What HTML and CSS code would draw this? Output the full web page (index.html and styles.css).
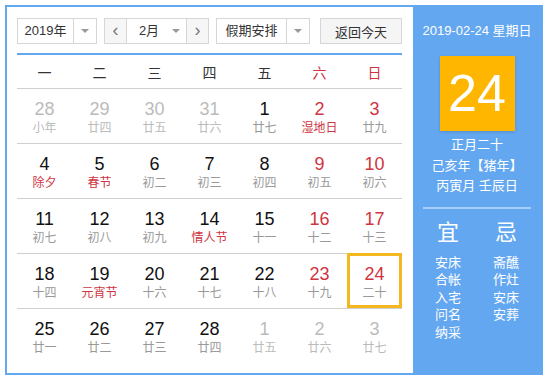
FILE: index.html
```html
<!DOCTYPE html>
<html>
<head>
    <title>万年历</title>
    <meta charset="UTF-8">
    <link rel="stylesheet" href="styles.css">
</head>
<body>
    <div class="calendar">
        <div class="main">
            <div class="toolbar">
                <div class="select year-select">
                    <span class="select-text">2019年</span>
                    <span class="select-arrow"><i></i></span>
                </div>
                <div class="month-group">
                    <span class="nav-btn">&lsaquo;</span>
                    <div class="month-select">
                        <span class="select-text">2月</span>
                        <span class="select-arrow plain"><i></i></span>
                    </div>
                    <span class="nav-btn">&rsaquo;</span>
                </div>
                <div class="select holiday-select">
                    <span class="select-text">假期安排</span>
                    <span class="select-arrow"><i></i></span>
                </div>
                <button class="today-btn">返回今天</button>
            </div>

            <div class="week-head">
                <span>一</span><span>二</span><span>三</span><span>四</span><span>五</span>
                <span class="red">六</span><span class="red">日</span>
            </div>

            <div class="days">
                <div class="row">
                    <div class="cell other"><b>28</b><em>小年</em></div>
                    <div class="cell other"><b>29</b><em>廿四</em></div>
                    <div class="cell other"><b>30</b><em>廿五</em></div>
                    <div class="cell other"><b>31</b><em>廿六</em></div>
                    <div class="cell"><b>1</b><em>廿七</em></div>
                    <div class="cell weekend"><b>2</b><em class="fest">湿地日</em></div>
                    <div class="cell weekend"><b>3</b><em>廿九</em></div>
                </div>
                <div class="row">
                    <div class="cell"><b>4</b><em class="fest">除夕</em></div>
                    <div class="cell"><b>5</b><em class="fest">春节</em></div>
                    <div class="cell"><b>6</b><em>初二</em></div>
                    <div class="cell"><b>7</b><em>初三</em></div>
                    <div class="cell"><b>8</b><em>初四</em></div>
                    <div class="cell weekend"><b>9</b><em>初五</em></div>
                    <div class="cell weekend"><b>10</b><em>初六</em></div>
                </div>
                <div class="row">
                    <div class="cell"><b>11</b><em>初七</em></div>
                    <div class="cell"><b>12</b><em>初八</em></div>
                    <div class="cell"><b>13</b><em>初九</em></div>
                    <div class="cell"><b>14</b><em class="fest">情人节</em></div>
                    <div class="cell"><b>15</b><em>十一</em></div>
                    <div class="cell weekend"><b>16</b><em>十二</em></div>
                    <div class="cell weekend"><b>17</b><em>十三</em></div>
                </div>
                <div class="row">
                    <div class="cell"><b>18</b><em>十四</em></div>
                    <div class="cell"><b>19</b><em class="fest">元宵节</em></div>
                    <div class="cell"><b>20</b><em>十六</em></div>
                    <div class="cell"><b>21</b><em>十七</em></div>
                    <div class="cell"><b>22</b><em>十八</em></div>
                    <div class="cell weekend"><b>23</b><em>十九</em></div>
                    <div class="cell weekend today"><b>24</b><em>二十</em></div>
                </div>
                <div class="row">
                    <div class="cell"><b>25</b><em>廿一</em></div>
                    <div class="cell"><b>26</b><em>廿二</em></div>
                    <div class="cell"><b>27</b><em>廿三</em></div>
                    <div class="cell"><b>28</b><em>廿四</em></div>
                    <div class="cell other"><b>1</b><em>廿五</em></div>
                    <div class="cell other"><b>2</b><em>廿六</em></div>
                    <div class="cell other"><b>3</b><em>廿七</em></div>
                </div>
            </div>
        </div>

        <div class="side">
            <div class="side-date">2019-02-24 星期日</div>
            <div class="big-day">24</div>
            <div class="lunar">
                <p>正月二十</p>
                <p>己亥年【猪年】</p>
                <p>丙寅月 壬辰日</p>
            </div>
            <div class="side-line"></div>
            <div class="almanac">
                <div class="alm-col">
                    <h2>宜</h2>
                    <p>安床</p>
                    <p>合帐</p>
                    <p>入宅</p>
                    <p>问名</p>
                    <p>纳采</p>
                </div>
                <div class="alm-col">
                    <h2>忌</h2>
                    <p>斋醮</p>
                    <p>作灶</p>
                    <p>安床</p>
                    <p>安葬</p>
                </div>
            </div>
        </div>
    </div>
</body>
</html>
```

FILE: styles.css
```css
* {
    margin: 0;
    padding: 0;
    box-sizing: border-box;
}

body {
    font-family: "Liberation Sans", "Noto Sans CJK SC", sans-serif;
    background: #fff;
    color: #333;
}

.calendar {
    margin: 5px 0 0 5px;
    width: 538px;
    height: 370px;
    border: 2px solid #63a7f0;
    display: flex;
}

.main {
    width: 406px;
    padding: 11px 11px 0 10px;
}

/* Toolbar */
.toolbar {
    display: flex;
    height: 26px;
    margin-bottom: 9px;
    font-size: 13px;
}

.select,
.month-group {
    display: flex;
    border: 1px solid #d6d6d6;
    background: #fff;
}

.year-select {
    width: 80px;
}

.year-select .select-text {
    width: 55px;
}

.holiday-select {
    width: 94px;
    margin-left: 7px;
}

.holiday-select .select-text {
    width: 69px;
}

.select-text {
    display: flex;
    align-items: center;
    justify-content: center;
    line-height: 24px;
}

.select-arrow {
    flex: 1;
    display: flex;
    align-items: center;
    justify-content: center;
    border-left: 1px solid #d6d6d6;
}

.select-arrow.plain {
    border-left: none;
}

.select-arrow i {
    width: 0;
    height: 0;
    border-left: 4px solid transparent;
    border-right: 4px solid transparent;
    border-top: 4px solid #999;
}

.month-group {
    width: 105px;
    margin-left: 7px;
}

.nav-btn {
    width: 22px;
    background: #f6f6f6;
    color: #777;
    font-size: 18px;
    line-height: 22px;
    text-align: center;
}

.nav-btn:first-child {
    border-right: 1px solid #d6d6d6;
}

.nav-btn:last-child {
    border-left: 1px solid #d6d6d6;
}

.month-select {
    flex: 1;
    display: flex;
}

.month-select .select-text {
    width: 38px;
    padding-left: 6px;
}

.today-btn {
    margin-left: 10px;
    width: 82px;
    height: 26px;
    border: 1px solid #d6d6d6;
    background: #f5f5f5;
    font-family: inherit;
    font-size: 13px;
    color: #333;
}

/* Week header */
.week-head {
    display: grid;
    grid-template-columns: repeat(7, 55px);
    height: 36px;
    border-top: 2px solid #63a7f0;
    border-bottom: 1px solid #cfcfcf;
    font-size: 14px;
    align-items: center;
    text-align: center;
}

.red {
    color: #d0343f;
}

/* Day grid */
.row {
    display: grid;
    grid-template-columns: repeat(7, 55px);
    height: 55px;
    border-bottom: 1px solid #cfcfcf;
}

.row:last-child {
    border-bottom: none;
}

.cell {
    position: relative;
    padding-top: 9px;
    text-align: center;
}

.cell b {
    display: block;
    font-weight: normal;
    font-size: 18px;
    line-height: 22px;
    color: #111;
}

.cell em {
    display: block;
    font-style: normal;
    font-size: 12px;
    line-height: 16px;
    color: #999;
}

.cell.weekend b {
    color: #d0343f;
}

.cell em.fest {
    color: #d0343f;
}

.cell.other b,
.cell.other em {
    color: #bbb;
}

.cell.today::after {
    content: "";
    position: absolute;
    top: -1px;
    left: 0;
    right: 0;
    bottom: 0;
    border: 3px solid #f4b71e;
}

/* Side panel */
.side {
    flex: 1;
    background: #63a7f0;
    color: #fff;
    text-align: center;
    padding-top: 16px;
}

.side-date {
    font-size: 13px;
    line-height: 16px;
}

.big-day {
    width: 75px;
    height: 75px;
    margin: 17px auto 0;
    background: #ffb600;
    box-shadow: 0 1px 3px rgba(0, 0, 0, 0.15);
    font-size: 52px;
    line-height: 75px;
}

.lunar {
    margin-top: 4px;
    font-size: 13px;
    line-height: 20.5px;
}

.side-line {
    height: 2px;
    margin: 10px 10px 0;
    background: rgba(255, 255, 255, 0.45);
}

.almanac {
    display: flex;
    justify-content: center;
    gap: 2px;
    margin-top: 11px;
}

.alm-col {
    width: 56px;
}

.alm-col h2 {
    font-size: 22px;
    font-weight: normal;
    line-height: 26px;
    margin-bottom: 8px;
}

.alm-col p {
    font-size: 13px;
    line-height: 17.5px;
}
```
